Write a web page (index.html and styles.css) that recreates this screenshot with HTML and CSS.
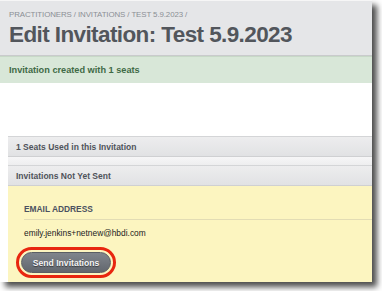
FILE: index.html
```html
<!DOCTYPE html>
<html lang="en">
<head>
    <meta charset="UTF-8">
    <title>Edit Invitation: Test 5.9.2023</title>
    <link rel="stylesheet" href="styles.css">
</head>
<body>
    <div class="frame">
        <header class="page-head">
            <div class="crumbs">Practitioners / Invitations / Test 5.9.2023 /</div>
            <h1>Edit Invitation: Test 5.9.2023</h1>
        </header>

        <div class="alert">Invitation created with 1 seats</div>

        <div class="blank"></div>

        <section class="panels">
            <div class="panel-head">1 Seats Used in this Invitation</div>
            <div class="panel-gap"></div>
            <div class="panel-head">Invitations Not Yet Sent</div>
            <div class="panel-body">
                <div class="col-head">Email Address</div>
                <div class="row">emily.jenkins+netnew@hbdi.com</div>
                <button class="send-btn">Send Invitations</button>
            </div>
        </section>
    </div>
</body>
</html>
```

FILE: styles.css
```css
html, body {
    margin: 0;
    padding: 0;
}
body {
    width: 382px;
    height: 291px;
    overflow: hidden;
    background: #fff;
    font-family: 'Liberation Sans', Arial, sans-serif;
}
.frame {
    width: 372px;
    height: 282px;
    overflow: hidden;
    background: #fff;
    box-shadow: 5px 5px 6px rgba(0,0,0,0.7);
}
.page-head {
    background: #e5e6e8;
    border-top: 1px solid #f6f6f6;
    border-bottom: 1px solid #c9cacc;
    padding: 9px 9px 6px;
    height: 39px;
}
.crumbs {
    font-size: 7.9px;
    text-transform: uppercase;
    color: #8b8f95;
    letter-spacing: -0.1px;
    line-height: 10px;
}
h1 {
    margin: 2px 0 0;
    font-size: 22.5px;
    line-height: 26px;
    color: #52565c;
    letter-spacing: -0.6px;
}
.alert {
    background: #d8e7d8;
    border-top: 1px solid #c7d8c7;
    height: 26px;
    line-height: 26px;
    padding-left: 9px;
    font-size: 9.2px;
    font-weight: bold;
    color: #3f6a46;
}
.blank {
    height: 53px;
}
.panels {
    margin-left: 8px;
}
.panel-head {
    height: 19px;
    line-height: 20px;
    padding-left: 8px;
    background: linear-gradient(#ededee, #e1e2e4);
    border-top: 1px solid #d4d5d7;
    border-bottom: 1px solid #cfd0d2;
    font-size: 8.5px;
    font-weight: bold;
    color: #4f535a;
}
.panel-gap {
    height: 8px;
    background: linear-gradient(#f6f6f7, #eeeeef);
}
.panel-body {
    background: #fcf5c0;
    padding: 18px 0 20px 16px;
    height: 90px;
}
.col-head {
    font-size: 8.4px;
    font-weight: bold;
    text-transform: uppercase;
    color: #4b5160;
    padding-bottom: 5px;
    border-bottom: 1px solid #e2dcb4;
}
.row {
    font-size: 8.4px;
    color: #222;
    padding: 8px 0 0;
    height: 14px;
}
.send-btn {
    margin: 10px 0 0 -3px;
    width: 90px;
    height: 21px;
    border: 1px solid #5a5e64;
    border-radius: 11px;
    background: linear-gradient(#80858c, #62676e);
    color: #f4f4f4;
    font-family: 'Liberation Sans', Arial, sans-serif;
    font-size: 8.6px;
    font-weight: bold;
    text-shadow: 0 1px 1px rgba(0,0,0,0.5);
    outline: 3px solid #e8260f;
    outline-offset: 2px;
    padding: 0;
}
```
